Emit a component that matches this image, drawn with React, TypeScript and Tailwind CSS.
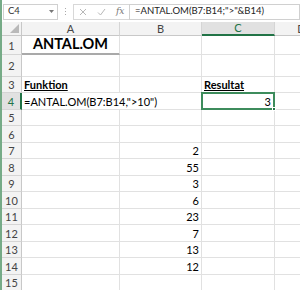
import React from "react";

const rowH = [
  "h-[19px]", "h-[22px]", "h-[16px]", "h-[17px]", "h-[16px]", "h-[17px]", "h-[16px]", "h-[17px]",
  "h-[16px]", "h-[17px]", "h-[16px]", "h-[17px]", "h-[16px]", "h-[17px]", "h-[16px]",
];

const bVals: Record<number, string> = { 7: "2", 8: "55", 9: "3", 10: "6", 11: "23", 12: "7", 13: "13", 14: "12" };

function RowHeader({ n }: { n: number }) {
  const sel = n === 4;
  return (
    <div
      className={
        "w-[20px] shrink-0 flex items-center justify-center text-[11px] leading-[13px] border-b border-[#d5d5d5] " +
        (sel
          ? "bg-[#e1e1e1] text-[#217346] border-r-2 border-r-[#217346]"
          : "bg-[#f3f3f3] text-[#444] border-r border-r-[#c8c8c8]")
      }
    >
      {n}
    </div>
  );
}

function Cell({ w, children, className = "" }: { w: string; children?: React.ReactNode; className?: string }) {
  return (
    <div className={"shrink-0 flex items-end border-r border-b border-[#e1e1e1] overflow-visible whitespace-nowrap " + w + " " + className}>
      {children}
    </div>
  );
}

export default function App() {
  const rows = Array.from({ length: 15 }, (_, i) => i + 1);
  return (
    <div className="w-[300px] h-[290px] overflow-hidden bg-white flex [font-family:Lato,'Liberation_Sans',sans-serif] text-black">
      <div className="w-[2px] shrink-0 bg-[#76ab87]" />
      <div className="flex-1 flex flex-col min-w-0">
        {/* formula bar */}
        <div className="h-[22px] shrink-0 flex items-center gap-0 pt-[1px] bg-white">
          <div className="w-[55px] h-[16px] ml-[1px] border border-[#d0d0d0] flex items-center justify-between pl-[4px] pr-[3px] text-[9.5px] text-[#333]">
            <span>C4</span>
            <svg width="5" height="3" viewBox="0 0 5 3"><path d="M0 0h5L2.5 3z" fill="#777" /></svg>
          </div>
          <div className="w-[15px] flex flex-col items-center justify-center gap-[2px]">
            <span className="w-[1px] h-[1px] bg-[#aaa]" />
            <span className="w-[1px] h-[1px] bg-[#aaa]" />
            <span className="w-[1px] h-[1px] bg-[#aaa]" />
          </div>
          <div className="w-[56px] h-[16px] border border-[#d8d8d8] border-r-0 flex items-center pl-[5px] gap-[10px]">
            <svg width="8" height="8" viewBox="0 0 8 8"><path d="M1 1l6 6M7 1L1 7" stroke="#b8b8b8" strokeWidth="1" /></svg>
            <svg width="9" height="8" viewBox="0 0 9 8"><path d="M1 4.5l2.5 2.5L8 1" stroke="#b8b8b8" strokeWidth="1" fill="none" /></svg>
            <span className="text-[9px] italic text-[#777] [font-family:'DejaVu_Serif',serif] leading-none">fx</span>
          </div>
          <div className="flex-1 h-[16px] border border-[#d0d0d0] flex items-center pl-[5px] text-[9.5px] text-[#222] whitespace-nowrap overflow-hidden">
            =ANTAL.OM(B7:B14;"&gt;"&amp;B14)
          </div>
        </div>

        {/* column headers */}
        <div className="h-[14px] shrink-0 flex text-[11px] leading-[12px] text-[#444]">
          <div className="w-[20px] shrink-0 bg-[#f3f3f3] border-r border-b border-[#c8c8c8] relative">
            <svg className="absolute right-[2px] bottom-[2px]" width="9" height="9" viewBox="0 0 9 9"><path d="M9 0V9H0z" fill="#b9b9b9" /></svg>
          </div>
          <div className="w-[98px] shrink-0 bg-[#f3f3f3] border-r border-b border-[#d5d5d5] border-b-[#c8c8c8] flex items-center justify-center">A</div>
          <div className="w-[82px] shrink-0 bg-[#f3f3f3] border-r border-b border-[#d5d5d5] border-b-[#c8c8c8] flex items-center justify-center">B</div>
          <div className="w-[73px] shrink-0 bg-[#e1e1e1] border-r border-[#d5d5d5] border-b-2 border-b-[#217346] text-[#217346] flex items-center justify-center">C</div>
          <div className="w-[53px] shrink-0 bg-[#f3f3f3] border-b border-[#c8c8c8] flex items-center justify-center">D</div>
        </div>

        {rows.map((n, i) => (
          <div key={n} className={"shrink-0 flex text-[11px] leading-[14px] " + rowH[i]}>
            <RowHeader n={n} />
            {n === 1 ? (
              <>
                <Cell w="w-[98px]" className="justify-center font-bold text-[14.5px] leading-none border-b-2 border-b-[#a9a9a9] pb-[2px]">ANTAL.OM</Cell>
                <Cell w="w-[82px]" />
                <Cell w="w-[73px]" />
                <Cell w="w-[53px]" />
              </>
            ) : n === 3 ? (
              <>
                <Cell w="w-[98px]" className="pl-[2px] font-bold underline">Funktion</Cell>
                <Cell w="w-[82px]" />
                <Cell w="w-[73px]" className="pl-[2px] font-bold underline">Resultat</Cell>
                <Cell w="w-[53px]" />
              </>
            ) : n === 4 ? (
              <>
                <Cell w="w-[180px]" className="pl-[2px]">=ANTAL.OM(B7:B14,"&gt;10")</Cell>
                <Cell w="w-[73px]" className="justify-end pr-[3px] relative">
                  3
                  <div className="absolute left-[-1px] top-[-1px] right-[-1px] bottom-[-1px] border-2 border-[#3d8c5c]" />
                  <div className="absolute right-[-2px] bottom-[-2px] w-[4px] h-[4px] bg-[#217346] border border-white" />
                </Cell>
                <Cell w="w-[53px]" />
              </>
            ) : (
              <>
                <Cell w="w-[98px]" />
                <Cell w="w-[82px]" className="justify-end pr-[2px]">{bVals[n] ?? ""}</Cell>
                <Cell w="w-[73px]" />
                <Cell w="w-[53px]" />
              </>
            )}
          </div>
        ))}
      </div>
    </div>
  );
}
